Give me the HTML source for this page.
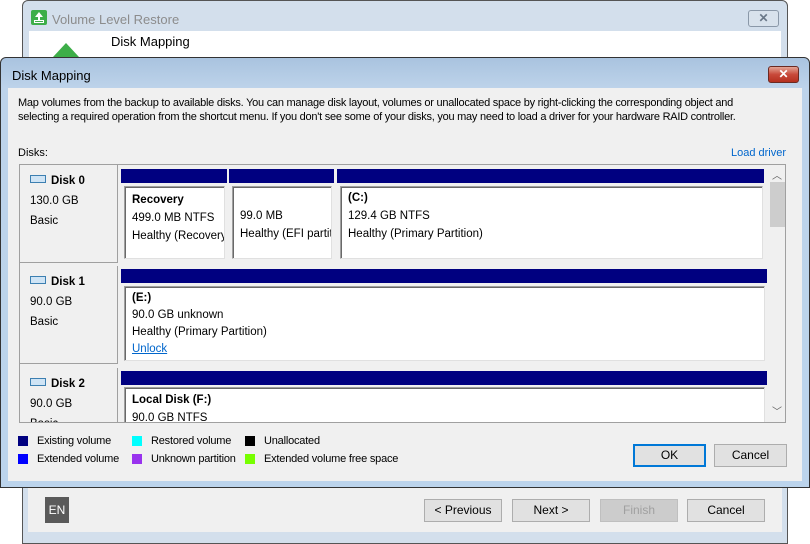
<!DOCTYPE html>
<html><head><style>
*{margin:0;padding:0;box-sizing:border-box}
html,body{width:810px;height:544px;overflow:hidden}
body{position:relative;background:#fff;font-family:"Liberation Sans",sans-serif;font-size:12px;color:#000}
.a{position:absolute}
.bar{position:absolute;background:#000080;height:14px}
.box{position:absolute;background:#fff;border:1px solid #a0a0a0;border-right-color:#e0e0e0;border-bottom-color:#e0e0e0;box-shadow:inset 1px 1px 0 #696969}
.box div{white-space:nowrap;overflow:hidden}
.disk{position:absolute;left:0;width:98px;background:#f0f0f0;border-right:1px solid #a0a0a0;border-bottom:1px solid #a0a0a0;padding:6px 0 0 10px;line-height:20px;font-size:11.5px}
.ic{display:inline-block;width:16px;height:8px;border:1px solid #3c7fb1;background:#cfe4f5;margin-right:5px;vertical-align:1px}
.sw{position:absolute;width:10px;height:10px}
.lg{position:absolute;font-size:11px;letter-spacing:-0.2px}
.btn{position:absolute;height:23px;background:#e1e1e1;border:1px solid #adadad;text-align:center;line-height:21px}
</style></head><body>
<div class="a" style="left:22px;top:0;width:766px;height:544px;background:#d3dfec;border:1px solid #555;border-radius:6px 6px 0 0"></div>
<div class="a" style="left:31px;top:10px;width:16px;height:15px;background:#3dae49;border-radius:2px"></div>
<div class="a" style="left:35px;top:12px;width:0;height:0;border-left:4px solid transparent;border-right:4px solid transparent;border-bottom:5px solid #fff"></div>
<div class="a" style="left:38px;top:16px;width:2px;height:4px;background:#fff"></div>
<div class="a" style="left:34px;top:20px;width:10px;height:3px;border:1px solid #fff"></div>
<div class="a" style="left:52px;top:12px;font-size:13px;color:#8c8c8c">Volume Level Restore</div>
<div class="a" style="left:748px;top:10px;width:31px;height:17px;border:1px solid #8a98a8;border-radius:3px;background:#d8e2ec;color:#6a7888;text-align:center;font-size:12px;line-height:15px;font-weight:bold">✕</div>
<div class="a" style="left:29px;top:31px;width:752px;height:30px;background:#fff"></div>
<div class="a" style="left:111px;top:34px;font-size:13px">Disk Mapping</div>
<div class="a" style="left:53px;top:43px;width:0;height:0;border-left:13px solid transparent;border-right:13px solid transparent;border-bottom:14px solid #3dae49"></div>
<div class="a" style="left:28px;top:487px;width:754px;height:45px;background:#f0f0f0"></div>
<div class="a" style="left:45px;top:497px;width:24px;height:26px;background:#5a5a5a;color:#fff;text-align:center;line-height:26px">EN</div>
<div class="btn" style="left:424px;top:499px;width:78px">&lt; Previous</div>
<div class="btn" style="left:512px;top:499px;width:78px">Next &gt;</div>
<div class="btn" style="left:600px;top:499px;width:78px;color:#a0a0a0;background:#ccc;border-color:#bfbfbf">Finish</div>
<div class="btn" style="left:687px;top:499px;width:78px">Cancel</div>
<div class="a" style="left:0;top:57px;width:810px;height:431px;background:linear-gradient(#a9c3df,#bdd3ea 30px,#bcd4ec);border:1px solid #333;border-radius:6px 6px 0 0"></div>
<div class="a" style="left:12px;top:68px;font-size:13px">Disk Mapping</div>
<div class="a" style="left:768px;top:66px;width:31px;height:17px;border:1px solid #6b2a22;border-radius:3px;background:linear-gradient(#e4a595,#c8493a 50%,#b5301f);color:#fff;text-align:center;line-height:15px;font-weight:bold">✕</div>
<div class="a" style="left:8px;top:88px;width:794px;height:393px;background:#f0f0f0"></div>
<div class="a" style="left:18px;top:96px;line-height:14px;font-size:11px;letter-spacing:-0.25px;white-space:nowrap">Map volumes from the backup to available disks. You can manage disk layout, volumes or unallocated space by right-clicking the corresponding object and<br>selecting a required operation from the shortcut menu. If you don't see some of your disks, you may need to load a driver for your hardware RAID controller.</div>
<div class="a" style="left:18px;top:147px;font-size:11px">Disks:</div>
<div class="a" style="left:731px;top:147px;font-size:11px;color:#0066cc">Load driver</div>
<div class="a" style="left:19px;top:164px;width:767px;height:259px;border:1px solid #a0a0a0;background:#f0f0f0;overflow:hidden">
 <div class="disk" style="top:0;height:98px"><b><span class="ic"></span>Disk 0</b><br>130.0 GB<br>Basic</div>
 <div class="disk" style="top:101px;height:98px"><b><span class="ic"></span>Disk 1</b><br>90.0 GB<br>Basic</div>
 <div class="disk" style="top:203px;height:98px"><b><span class="ic"></span>Disk 2</b><br>90.0 GB<br>Basic</div>
 <div class="bar" style="left:101px;top:4px;width:106px"></div>
 <div class="bar" style="left:209px;top:4px;width:105px"></div>
 <div class="bar" style="left:317px;top:4px;width:427px"></div>
 <div class="box" style="left:104px;top:21px;width:101px;height:73px;padding:4px 0 0 7px;line-height:18px;font-size:11.5px"><div><b>Recovery</b></div><div>499.0 MB NTFS</div><div>Healthy (Recovery</div></div>
 <div class="box" style="left:212px;top:21px;width:100px;height:73px;padding:20px 0 0 7px;line-height:18px;font-size:11.5px"><div>99.0 MB</div><div>Healthy (EFI partition</div></div>
 <div class="box" style="left:320px;top:21px;width:423px;height:73px;padding:2px 0 0 7px;line-height:18px;font-size:11.5px"><div><b>(C:)</b></div><div>129.4 GB NTFS</div><div>Healthy (Primary Partition)</div></div>
 <div class="bar" style="left:101px;top:104px;width:646px"></div>
 <div class="box" style="left:104px;top:121px;width:641px;height:75px;padding:3px 0 0 7px;line-height:17px;font-size:11.5px"><div><b>(E:)</b></div><div>90.0 GB unknown</div><div>Healthy (Primary Partition)</div><div style="color:#0066cc;text-decoration:underline">Unlock</div></div>
 <div class="bar" style="left:101px;top:206px;width:646px"></div>
 <div class="box" style="left:104px;top:222px;width:641px;height:75px;padding:3px 0 0 7px;line-height:18px;font-size:11.5px"><div><b>Local Disk (F:)</b></div><div>90.0 GB NTFS</div></div>
 <div class="a" style="left:748px;top:0;width:18px;height:258px;background:#f0f0f0"></div>
 <div class="a" style="left:750px;top:17px;width:15px;height:45px;background:#cdcdcd"></div>
 <div class="a" style="left:752px;top:2px;color:#606060;font-size:10px">︿</div>
 <div class="a" style="left:752px;top:238px;color:#606060;font-size:10px">﹀</div>
</div>
<div class="sw" style="left:18px;top:436px;background:#000080"></div><div class="lg" style="left:37px;top:435px">Existing volume</div>
<div class="sw" style="left:18px;top:454px;background:#0000ff"></div><div class="lg" style="left:37px;top:453px">Extended volume</div>
<div class="sw" style="left:132px;top:436px;background:#00ffff"></div><div class="lg" style="left:151px;top:435px">Restored volume</div>
<div class="sw" style="left:132px;top:454px;background:#9933ee"></div><div class="lg" style="left:151px;top:453px">Unknown partition</div>
<div class="sw" style="left:245px;top:436px;background:#000"></div><div class="lg" style="left:264px;top:435px">Unallocated</div>
<div class="sw" style="left:245px;top:454px;background:#77ff00"></div><div class="lg" style="left:264px;top:453px">Extended volume free space</div>
<div class="btn" style="left:633px;top:444px;width:73px;border:2px solid #0078d7;line-height:19px">OK</div>
<div class="btn" style="left:714px;top:444px;width:73px">Cancel</div>
</body></html>
